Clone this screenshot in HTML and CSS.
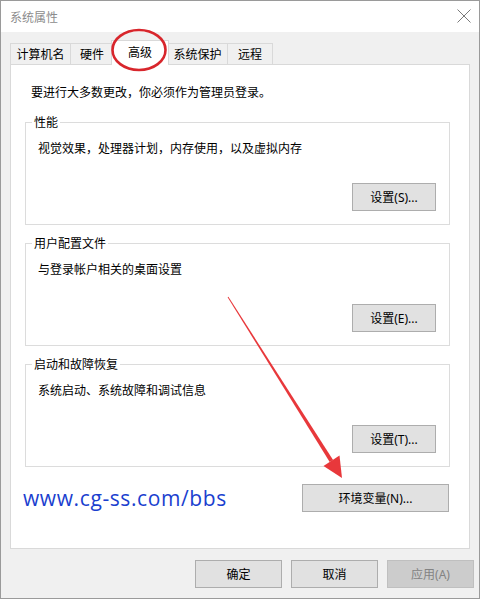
FILE: index.html
```html
<!DOCTYPE html>
<html lang="zh-CN">
<head>
  <meta charset="UTF-8" />
  <title>系统属性</title>
  <link rel="stylesheet" href="styles.css">
</head>
<body>

<div class="window">
  <div class="titlebar">
    <span class="title">系统属性</span>
    <svg class="close" width="14" height="14" viewBox="0 0 14 14">
      <path d="M0.5 0.5 L13.5 13.5 M13.5 0.5 L0.5 13.5" stroke="#7a7a7a" stroke-width="1" fill="none"/>
    </svg>
  </div>

  <div class="content">
    <div class="tabs">
      <div class="tab tab-wide">计算机名</div>
      <div class="tab">硬件</div>
      <div class="tab active">高级</div>
      <div class="tab tab-wide">系统保护</div>
      <div class="tab tab-last">远程</div>
    </div>

    <div class="panel">
      <p class="intro">要进行大多数更改，你必须作为管理员登录。</p>

      <fieldset class="group">
        <legend>性能</legend>
        <p class="desc">视觉效果，处理器计划，内存使用，以及虚拟内存</p>
        <div class="group-actions"><button class="btn">设置(S)...</button></div>
      </fieldset>

      <fieldset class="group">
        <legend>用户配置文件</legend>
        <p class="desc">与登录帐户相关的桌面设置</p>
        <div class="group-actions"><button class="btn">设置(E)...</button></div>
      </fieldset>

      <fieldset class="group">
        <legend>启动和故障恢复</legend>
        <p class="desc">系统启动、系统故障和调试信息</p>
        <div class="group-actions"><button class="btn">设置(T)...</button></div>
      </fieldset>

      <div class="env-row">
        <span class="watermark">www.cg-ss.com/bbs</span>
        <button class="btn btn-wide">环境变量(N)...</button>
      </div>
    </div>

    <div class="footer">
      <button class="btn btn-footer">确定</button>
      <button class="btn btn-footer">取消</button>
      <button class="btn btn-footer" disabled>应用(A)</button>
    </div>
  </div>

  <!-- red annotation: circle round the tab, arrow to the button -->
  <svg class="annotations" width="480" height="599" viewBox="0 0 480 599">
    <ellipse cx="139" cy="50" rx="26.5" ry="20" fill="none" stroke="#d8262c" stroke-width="2.6"/>
    <polygon points="227.6,297.2 228.4,296.8 333.1,459.9 329.7,462.1" fill="#e8383b"/>
    <polygon points="342,478 339.5,455.5 323.5,466" fill="#e8383b"/>
  </svg>
</div>

</body>
</html>
```

FILE: styles.css
```css
html, body {
    margin: 0;
    padding: 0;
    background: #f0f0f0;
    font-family: "Noto Sans", "Noto Sans CJK SC", sans-serif;
    font-size: 12px;
    color: #000;
}

.window {
    position: relative;
    width: 480px;
    height: 599px;
    box-sizing: border-box;
    border: 1px solid #9a9a9a;
    background: #f0f0f0;
    display: flex;
    flex-direction: column;
}

.titlebar {
    height: 31px;
    background: #fff;
    display: flex;
    align-items: center;
    justify-content: space-between;
    padding: 0 8px 0 9px;
}
.title {
    color: #8c8c8c;
    font-family: "Noto Sans CJK SC", sans-serif;
    font-size: 12px;
}
.close { margin-top: -1px; }

.content {
    padding: 8px 9px 0 9px;
    display: flex;
    flex-direction: column;
}

/* tab strip */
.tabs {
    display: flex;
    align-items: flex-end;
    height: 24px;
}
.tab {
    box-sizing: border-box;
    width: 44px;
    height: 21px;
    margin-right: -1px;
    border: 1px solid #d9d9d9;
    border-bottom: none;
    background: #f0f0f0;
    font-family: "Noto Sans CJK SC", sans-serif;
    line-height: 20px;
    text-align: center;
}
.tab-wide { width: 61px; }
.tab-last { width: 46px; }
.tab.active {
    position: relative;
    z-index: 1;
    width: 58px;
    height: 25px;
    margin: 0 -2px -1px -2px;
    background: #fff;
    line-height: 22px;
}

.panel {
    box-sizing: border-box;
    height: 485px;
    background: #fff;
    border: 1px solid #d9d9d9;
    padding: 19px 19px 0 14px;
    display: flex;
    flex-direction: column;
}

.intro {
    margin: 0 0 14px 6px;
    line-height: 16px;
    font-family: "Noto Sans CJK SC", sans-serif;
}

.group {
    margin: 0 0 10px 0;
    padding: 0 13px 13px 12px;
    border: 1px solid #dcdcdc;
    display: flex;
    flex-direction: column;
}
.group legend {
    margin-left: -6px;
    padding: 0 2px;
    line-height: 16px;
    font-family: "Noto Sans CJK SC", sans-serif;
}
.desc {
    margin: 10px 0 0 0;
    line-height: 16px;
    font-family: "Noto Sans CJK SC", sans-serif;
}
.group-actions {
    display: flex;
    justify-content: flex-end;
    margin-top: 27px;
}

.btn {
    box-sizing: border-box;
    width: 84px;
    height: 28px;
    padding: 0;
    background: #e1e1e1;
    border: 1px solid #adadad;
    border-radius: 0;
    font-family: "Noto Sans", "Noto Sans CJK SC", sans-serif;
    font-size: 12px;
    color: #000;
}
.btn:disabled {
    background: #cccccc;
    border-color: #bfbfbf;
    color: #838383;
}
.btn-wide { width: 147px; margin-right: 1px; }

.env-row {
    display: flex;
    align-items: center;
    justify-content: space-between;
    margin-top: 7px;
}
.watermark {
    margin-left: -2px;
    color: #1b3fcf;
    font-family: "Open Sans", sans-serif;
    font-size: 21px;
    letter-spacing: 0.6px;
}

.footer {
    display: flex;
    justify-content: flex-end;
    gap: 9px;
    margin: 11px -4px 0 0;
}
.btn-footer { width: 87px; }

.annotations {
    position: absolute;
    top: -1px;
    left: -1px;
    z-index: 2;
    pointer-events: none;
}
```
